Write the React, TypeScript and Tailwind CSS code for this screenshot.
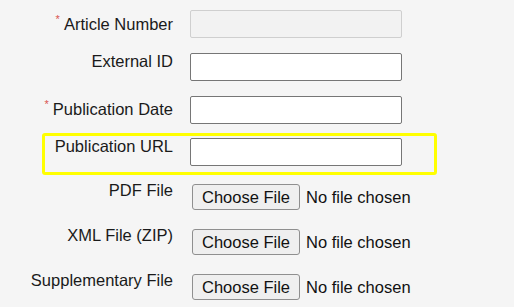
const labelCls = "w-[173px] shrink-0 text-right text-[16.5px] leading-[18px] text-[#1a1a1a]";
const inputCls = "ml-[17px] h-[28px] w-[212px] rounded-[2px] border border-[#767676] bg-white";

function Req() {
  return <span className="relative top-[-7px] mr-[4px] text-[11px] leading-none text-[#d9534f]">*</span>;
}

function FileRow({ label, className }: { label: string; className?: string }) {
  return (
    <div className={"flex items-start " + (className ?? "")}>
      <div className={labelCls + " -mt-[3px]"}>{label}</div>
      <div className="ml-[19px] flex items-center">
        <button
          type="button"
          className="h-[26px] w-[108px] rounded-[3px] border border-[#8f8f8f] bg-[#efefef] text-[16.5px] leading-none text-[#111]"
        >
          Choose File
        </button>
        <span className="ml-[6px] text-[16.5px] leading-none text-[#111]">No file chosen</span>
      </div>
    </div>
  );
}

export default function App() {
  return (
    <div className="min-h-[307px] w-[514px] bg-[#f5f5f5] pt-[10px] font-['Liberation_Sans',Arial,sans-serif]">
      <div className="flex items-start">
        <div className={labelCls + " pt-[5px]"}>
          <Req />
          Article Number
        </div>
        <div className="ml-[17px] h-[28px] w-[212px] rounded-[2px] border border-[#cfcfcf] bg-[#f2f2f2]" />
      </div>
      <div className="mt-[15px] flex items-start">
        <div className={labelCls + " -mt-[1px]"}>External ID</div>
        <input className={inputCls} />
      </div>
      <div className="mt-[15px] flex items-start">
        <div className={labelCls + " pt-[4px]"}>
          <Req />
          Publication Date
        </div>
        <input className={inputCls} />
      </div>
      <div className="ml-[42px] mt-[9px] w-[395px] rounded-[3px] border-[3px] border-[#ffff00] pb-[6px] pt-[2px]">
        <div className="flex items-start">
          <div className="-mt-[1px] w-[128px] shrink-0 text-right text-[16.5px] leading-[18px] text-[#1a1a1a]">
            Publication URL
          </div>
          <input className={inputCls} />
        </div>
      </div>
      <FileRow label="PDF File" className="mt-[9px]" />
      <FileRow label="XML File (ZIP)" className="mt-[19px]" />
      <FileRow label="Supplementary File" className="mt-[19px]" />
    </div>
  );
}
